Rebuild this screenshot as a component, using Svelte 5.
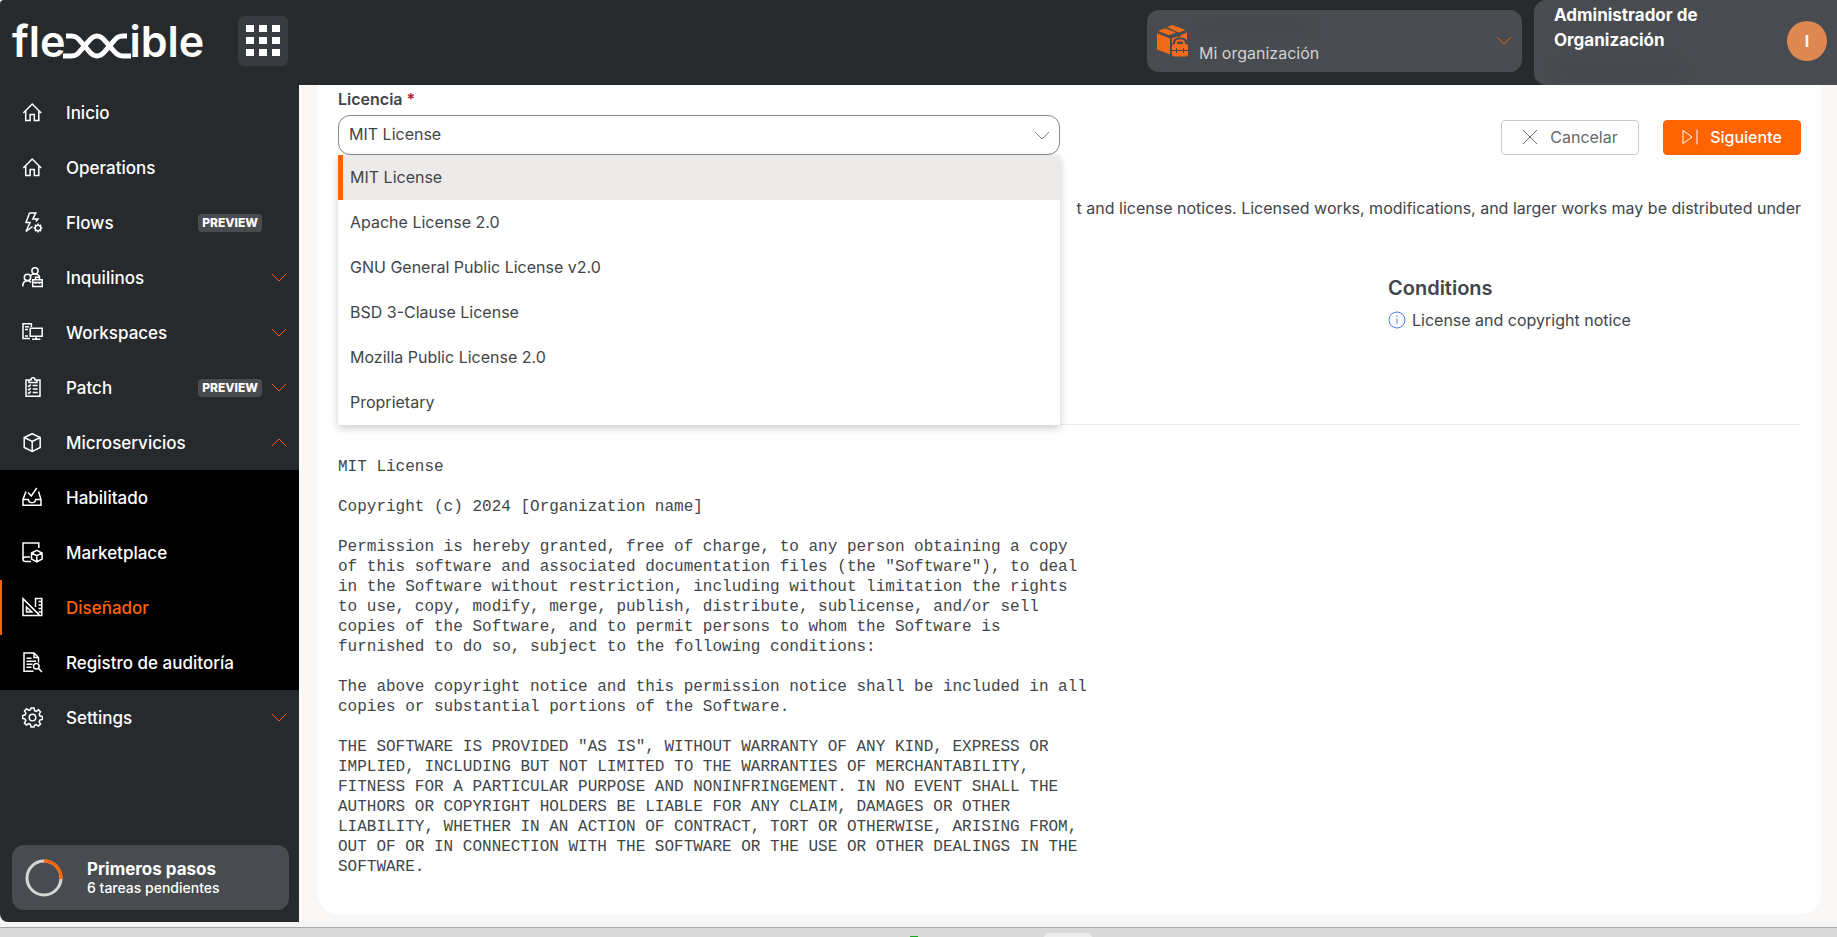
<script>
  const licenses = [
    'MIT License',
    'Apache License 2.0',
    'GNU General Public License v2.0',
    'BSD 3-Clause License',
    'Mozilla Public License 2.0',
    'Proprietary'
  ];

  const topItems = [
    { label: 'Inicio', icon: 'home' },
    { label: 'Operations', icon: 'home' },
    { label: 'Flows', icon: 'flows', preview: true },
    { label: 'Inquilinos', icon: 'tenants', group: true },
    { label: 'Workspaces', icon: 'workspaces', group: true },
    { label: 'Patch', icon: 'patch', preview: true, group: true }
  ];

  const microItems = [
    { label: 'Habilitado', icon: 'enabled' },
    { label: 'Marketplace', icon: 'market' },
    { label: 'Diseñador', icon: 'designer' },
    { label: 'Registro de auditoría', icon: 'audit' }
  ];

  let active = $state('Diseñador');
  let microOpen = $state(true);
  let license = $state('MIT License');
  let listOpen = $state(true);

  const licenseText = `MIT License

Copyright (c) 2024 [Organization name]

Permission is hereby granted, free of charge, to any person obtaining a copy
of this software and associated documentation files (the "Software"), to deal
in the Software without restriction, including without limitation the rights
to use, copy, modify, merge, publish, distribute, sublicense, and/or sell
copies of the Software, and to permit persons to whom the Software is
furnished to do so, subject to the following conditions:

The above copyright notice and this permission notice shall be included in all
copies or substantial portions of the Software.

THE SOFTWARE IS PROVIDED "AS IS", WITHOUT WARRANTY OF ANY KIND, EXPRESS OR
IMPLIED, INCLUDING BUT NOT LIMITED TO THE WARRANTIES OF MERCHANTABILITY,
FITNESS FOR A PARTICULAR PURPOSE AND NONINFRINGEMENT. IN NO EVENT SHALL THE
AUTHORS OR COPYRIGHT HOLDERS BE LIABLE FOR ANY CLAIM, DAMAGES OR OTHER
LIABILITY, WHETHER IN AN ACTION OF CONTRACT, TORT OR OTHERWISE, ARISING FROM,
OUT OF OR IN CONNECTION WITH THE SOFTWARE OR THE USE OR OTHER DEALINGS IN THE
SOFTWARE.`;

  function pick(name) {
    license = name;
    listOpen = false;
  }
</script>

{#snippet icon(name)}
  <svg class="icon" viewBox="0 0 21 21" aria-hidden="true">
    {#if name === 'home'}
      <path d="M1.3 11 10.2 2l9 9M3.7 9v9.4h4.4v-6h4.2v6h4.5V9" />
    {:else if name === 'flows'}
      <path d="M7.5 1h6.3l-3 6H16l-2.2 2.5M7.5 1 4 10.5h4L4 19.5l6.5-5" />
      <circle cx="16" cy="16" r="2.8" />
      <path d="M16 11.6v1.6M16 18.8v1.6M11.6 16h1.6M18.8 16h1.6M12.9 12.9l1.1 1.1M18 18l1.1 1.1M12.9 19.1 14 18M18 14l1.1-1.1" />
    {:else if name === 'tenants'}
      <circle cx="13" cy="3.8" r="3.1" />
      <circle cx="5.5" cy="10.4" r="3.2" />
      <path d="M.8 19.5c0-3.5 1.7-5.7 4.7-5.7 1.8 0 2.8.8 3.6 1.7M8.6 8.6C9.6 7.5 11 6.9 13 6.9c2.4 0 4 1.2 4.5 3" />
      <path d="M10.7 12.7H20.3v6.8h-9.6zM13.5 12.5v-2.2h4v2.2M10.7 15.6h9.6M13.6 14.7v2M17.4 14.7v2" />
    {:else if name === 'workspaces'}
      <path d="M8 16.6H1V1.8h8.4V5M3 4.8h4M3 7.6h3M3 14h3M8.2 6.3h12v8h-12zM14.2 14.4v2.8M10 17.2h8.3" />
    {:else if name === 'patch'}
      <path d="M6.5 3H4v16.3h14V3h-2.6M7 5.5V3h2c0-1.4.8-2.2 2-2.2S13 1.6 13 3h2v2.5z" />
      <path d="M10.7 8.5h5M10.7 12h5M10.7 15.5h5M6 8.5l1 1 1.8-2M6 12l1 1 1.8-2M6 15.5l1 1 1.8-2" />
    {:else if name === 'cube'}
      <path d="m10.2 1.7 8 3.8v10l-8 4-8-4v-10zM2.2 5.5l8 4 8-4M10.2 9.5v10" />
    {:else if name === 'enabled'}
      <path d="M4 4.500 1 12.500v5.800h18v-5.800L16.500 4.500M1 12.500h5.300c.3 2.200 1.700 3.200 3.700 3.200s3.400-1 3.700-3.200H19M6 5.500 9.300 9l5.400-8" />
    {:else if name === 'market'}
      <path d="M1 17.5V1h15.8v5M1 17.5C1 15.5 2.3 15 3.5 15H8M1 17.5c0 1.6 1 2 2.5 2H9" />
      <path d="m14.8 8.4 5.3 2.6v6l-5.3 2.8L9.5 17v-6zM9.5 11l5.3 2.7 5.3-2.7M14.8 13.7v6" />
    {:else if name === 'designer'}
      <path d="M1 1.6v17h17zM4.5 10v5h5.2zM13.5 10V1.4h6.3v17.2H18M19.5 4.5h-3M19.5 8h-3M19.5 11.5h-3M19.5 15h-3" />
    {:else if name === 'audit'}
      <path d="M11.5 19.3H2V1h10l4.500 4.500v5M12 1v4.500h4.500M4.500 6.300h5M4.500 9.300h9.500M4.500 12.300h6M4.500 15.300h5" />
      <circle cx="14.3" cy="14.3" r="2.8" />
      <path d="m16.4 16.4 3.6 3.6" />
    {:else if name === 'gear'}
      <circle cx="10.5" cy="10.5" r="3.3" />
      <path d="M9 1h3l.6 2.600 1.600.7 2.300-1.500 2 2.100-1.300 2.300.6 1.600 2.500.7v2.900l-2.500.7-.7 1.600 1.400 2.300-2.100 2-2.300-1.300-1.600.7L12 20H9l-.6-2.600-1.600-.7-2.300 1.300-2.100-2 1.400-2.300-.7-1.600L.7 11.400v-2.900l2.500-.7.7-1.600-1.400-2.300 2.100-2.100 2.300 1.500 1.600-.7z" />
    {/if}
  </svg>
{/snippet}

{#snippet chevron(up = false)}
  <svg class="chevron" class:up viewBox="0 0 16 9" aria-hidden="true">
    <path d="m1 1 7 7 7-7" />
  </svg>
{/snippet}

<div class="page">
  <header>
    <a class="brand" href="#inicio" aria-label="flexxible">
      <span>fle</span>
      <svg viewBox="0 0 68 26" aria-hidden="true">
        <path d="M3 3h5c5 0 7 2 10 6l7 8c3 4 5 6 9 6s6-2 9-6l7-8c3-4 5-6 10-6h4" />
        <path d="M0 23h8c5 0 7-2 10-6l7-8c3-4 5-6 9-6s6 2 9 6l7 8c3 4 6 6 10 6h8" />
      </svg>
      <span>ible</span>
    </a>
    <button class="apps" aria-label="Aplicaciones">
      {#each Array(9) as _}
        <i></i>
      {/each}
    </button>

    <button class="org">
      <svg class="org-icon" viewBox="0 0 32 32" aria-hidden="true">
        <path d="m1 6 7-2.800 11 4.300-7 2.800zM10 2 15.500 0l13 5-7 2.600zM0 8.300l13 5.200v16L0 24.500z" />
        <path d="M15 13.300 20 11.400l2 1 2-2.400 6-2.400v7.900c-1-2-3-3-6-3-5 0-8 1-8 5l-1 1z" />
        <path d="M15 21c0-1 1-2 2-2h1c0-3 1-4.500 3-4.500h4c2 0 3 1.500 3 4.500h1c1 0 2 1 2 2v8.500c0 1-1 2-2 2H17c-1 0-2-1-2-2zM20 19h6c0-2-.5-2.500-1.500-2.500h-3c-1 0-1.500.5-1.500 2.500z" fill-rule="evenodd" />
        <path class="cut" d="M15 25.500h16M19.500 23v5M26.500 23v5" />
      </svg>
      <span class="org-text">
        <i class="smudge"></i>
        <span>Mi organización</span>
      </span>
      {@render chevron()}
    </button>

    <button class="user">
      <span class="user-text">
        <b>Administrador de Organización</b>
        <i class="smudge"></i>
      </span>
      <span class="avatar">I</span>
    </button>
  </header>

  <div class="body">
    <aside>
      <nav>
        {#each topItems as item}
          <a class="item" href="#{item.icon}">
            {@render icon(item.icon)}
            <span class="label">{item.label}</span>
            {#if item.preview}<span class="badge">PREVIEW</span>{/if}
            <span class="slot">{#if item.group}{@render chevron()}{/if}</span>
          </a>
        {/each}
        <button class="item" aria-expanded={microOpen} onclick={() => (microOpen = !microOpen)}>
          {@render icon('cube')}
          <span class="label">Microservicios</span>
          <span class="slot">{@render chevron(microOpen)}</span>
        </button>
        {#if microOpen}
          <div class="sub">
            {#each microItems as item}
              <a
                class="item"
                class:active={active === item.label}
                href="#{item.icon}"
                onclick={() => (active = item.label)}
              >
                {@render icon(item.icon)}
                <span class="label">{item.label}</span>
              </a>
            {/each}
          </div>
        {/if}
        <a class="item" href="#settings">
          {@render icon('gear')}
          <span class="label">Settings</span>
          <span class="slot">{@render chevron()}</span>
        </a>
      </nav>

      <button class="steps">
        <svg viewBox="0 0 38 38" aria-hidden="true">
          <circle cx="19" cy="19" r="17" />
          <path d="M19 2a17 17 0 0 1 17 18" />
        </svg>
        <span>
          <b>Primeros pasos</b>
          <small>6 tareas pendientes</small>
        </span>
      </button>
    </aside>

    <main>
      <section class="card">
        <div class="top">
          <div class="field">
            <label for="license">Licencia <em>*</em></label>
            <div class="combo">
              <select id="license" bind:value={license}>
                {#each licenses as name}
                  <option value={name}>{name}</option>
                {/each}
              </select>
              {@render chevron()}
              {#if listOpen}
                <div class="list" role="listbox" aria-label="Licencia">
                  {#each licenses as name}
                    <button
                      role="option"
                      aria-selected={license === name}
                      class:selected={license === name}
                      onclick={() => pick(name)}>{name}</button>
                  {/each}
                </div>
              {/if}
            </div>
          </div>
          <div class="actions">
            <button class="btn">
              <svg viewBox="0 0 16 16" aria-hidden="true"><path d="m1 1 14 14M15 1 1 15" /></svg>
              Cancelar
            </button>
            <button class="btn primary">
              <svg viewBox="0 0 16 16" aria-hidden="true"><path d="M1 1.5v13L10 8zM15 .5v15" /></svg>
              Siguiente
            </button>
          </div>
        </div>

        <p class="summary">
          t and license notices. Licensed works, modifications, and larger works may be distributed under
        </p>

        <div class="rules">
          <div class="conditions">
            <h3>Conditions</h3>
            <p>
              <svg viewBox="0 0 18 18" aria-hidden="true">
                <circle cx="9" cy="9" r="8" />
                <path d="M9 7.5V13M9 4.5V6" />
              </svg>
              License and copyright notice
            </p>
          </div>
        </div>

        <pre>{licenseText}</pre>
      </section>
    </main>
  </div>

  <footer>
    <i class="dot"></i>
    <i class="tab"></i>
  </footer>
</div>

<style>
  :global(body) {
    margin: 0;
    background: #f5f5f5;
  }

  .page {
    min-height: 100vh;
    display: flex;
    flex-direction: column;
    overflow: hidden;
    font-family: Inter, 'Liberation Sans', sans-serif;
    font-size: 16px;
    color: #424549;
  }

  .page :global(*) {
    box-sizing: border-box;
  }

  button {
    font: inherit;
    color: inherit;
    background: none;
    border: 0;
    padding: 0;
    text-align: left;
    cursor: pointer;
  }

  a {
    color: inherit;
    text-decoration: none;
  }

  svg {
    fill: none;
    stroke: currentColor;
    flex: none;
  }

  /* header */
  header {
    display: flex;
    align-items: center;
    height: 85px;
    padding-left: 12px;
    background: #272a2d;
    color: #fff;
    border-top-left-radius: 4px;
  }

  .brand {
    display: flex;
    align-items: center;
    width: 196px;
    padding-bottom: 3px;
    font-size: 43px;
    line-height: 48px;
    font-weight: 600;
  }

  .brand svg {
    width: 68px;
    height: 26px;
    margin: 9px -2px 0 -2px;
    stroke-width: 5;
  }

  .apps {
    display: grid;
    grid-template-columns: repeat(3, 8px);
    gap: 5px;
    place-content: center;
    width: 50px;
    height: 50px;
    margin: 0 auto 4px 30px;
    border-radius: 6px;
    background: #383b40;
  }

  .apps i {
    height: 7px;
    background: #fff;
  }

  .org {
    display: flex;
    align-items: center;
    gap: 10px;
    width: 375px;
    height: 62px;
    margin: 0 12px 4px 0;
    padding: 0 10px;
    border-radius: 12px;
    background: #484b4f;
    color: #d2d2d3;
  }

  .org-icon {
    width: 32px;
    height: 32px;
    fill: #f26a1b;
    stroke: none;
  }

  .org-icon .cut {
    stroke: #484b4f;
    stroke-width: 1;
  }

  .org-text {
    flex: 1;
    display: flex;
    flex-direction: column;
    gap: 8px;
  }

  .smudge {
    display: block;
    width: 110px;
    height: 16px;
    border-radius: 8px;
    background: #454850;
    filter: blur(4px);
  }

  .user {
    display: flex;
    align-items: center;
    justify-content: space-between;
    width: 303px;
    height: 85px;
    padding: 0 10px 4px 20px;
    border-radius: 12px 0 0 12px;
    background: #484b4f;
  }

  .user-text {
    width: 180px;
    padding-bottom: 2px;
    font-size: 17px;
    line-height: 25px;
  }

  .user-text .smudge {
    margin-top: 8px;
    width: 130px;
  }

  .avatar {
    width: 40px;
    height: 40px;
    border-radius: 50%;
    background: #dc8850;
    line-height: 40px;
    text-align: center;
    font-weight: 700;
  }

  .chevron {
    width: 16px;
    height: 9px;
    color: #f06010;
  }

  .up {
    transform: rotate(180deg);
  }

  /* sidebar */
  .body {
    flex: 1;
    display: flex;
  }

  aside {
    flex: none;
    display: flex;
    flex-direction: column;
    justify-content: space-between;
    width: 299px;
    background: #272a2d;
    color: #fff;
    border-bottom-left-radius: 8px;
  }

  .item {
    display: flex;
    align-items: center;
    width: 100%;
    height: 55px;
    padding: 0 12px 0 22px;
    font-size: 17px;
    font-weight: 500;
  }

  .icon {
    width: 21px;
    height: 21px;
    stroke-width: 1.5;
  }

  .label {
    flex: 1;
    padding-left: 23px;
  }

  .badge {
    padding: 0 4px;
    border-radius: 4px;
    background: #484b4f;
    font-size: 12px;
    line-height: 18px;
    font-weight: 800;
  }

  .slot {
    display: flex;
    justify-content: flex-end;
    width: 25px;
  }

  .sub {
    background: #000;
  }

  .active {
    box-shadow: inset 2px 0 #ff6400;
  }

  .active .label {
    color: #ff6400;
  }

  .steps {
    display: flex;
    align-items: center;
    gap: 24px;
    height: 65px;
    margin: 12px 10px 12px 12px;
    padding: 0 13px;
    border-radius: 12px;
    background: #484b4f;
  }

  .steps svg {
    width: 38px;
    height: 38px;
    stroke: #d6d6d6;
    stroke-width: 3;
  }

  .steps path {
    stroke: #ff6400;
  }

  .steps b,
  .steps small {
    display: block;
    line-height: 20px;
  }

  .steps b {
    font-size: 17px;
  }

  .steps small {
    font-size: 14px;
    line-height: 18px;
    font-weight: 500;
  }

  /* content */
  main {
    flex: 1;
    min-width: 0;
    padding: 0 16px 8px 19px;
    background: #faf8f7;
  }

  .card {
    height: 100%;
    padding: 3px 20px 0;
    border-radius: 0 0 20px 20px;
    background: #fff;
  }

  .top {
    display: grid;
    grid-template-columns: 1fr 1fr;
    gap: 20px;
  }

  label {
    display: block;
    line-height: 22px;
    margin-bottom: 5px;
    font-weight: 600;
  }

  em {
    font-style: normal;
    color: #b3202a;
  }

  .combo {
    position: relative;
  }

  select {
    display: block;
    width: 100%;
    height: 40px;
    padding: 0 10px 2px;
    border: 1px solid #85878b;
    border-radius: 12px;
    background: #fff;
    font: inherit;
    color: inherit;
    appearance: none;
  }

  .combo .chevron {
    position: absolute;
    top: 16px;
    right: 10px;
    color: #85878b;
    pointer-events: none;
  }

  .list {
    position: absolute;
    z-index: 2;
    top: 100%;
    left: 0;
    right: 0;
    background: #fff;
    box-shadow: 0 3px 8px rgba(0, 0, 0, 0.2);
  }

  .list button {
    display: block;
    width: 100%;
    height: 45px;
    padding: 0 12px 2px;
  }

  .list .selected {
    background: #ecebe9;
    box-shadow: inset 5px 0 #ff6400;
  }

  .actions {
    display: flex;
    justify-content: flex-end;
    align-items: flex-end;
    gap: 24px;
  }

  .btn {
    display: flex;
    align-items: center;
    justify-content: center;
    gap: 12px;
    width: 138px;
    height: 35px;
    padding-bottom: 1px;
    border: 1px solid #c9c9c9;
    border-radius: 4px;
    color: #66696c;
  }

  .btn svg {
    width: 16px;
    height: 16px;
  }

  .primary {
    border-color: #ff6400;
    background: #ff6400;
    color: #fff;
    font-weight: 500;
  }

  .summary {
    margin: 41px 0 0;
    line-height: 24px;
    text-align: right;
  }

  .rules {
    display: grid;
    grid-template-columns: repeat(3, 1fr);
    gap: 112px;
    height: 173px;
    margin-top: 32px;
    padding-top: 24px;
    border-bottom: 1px solid #ececec;
  }

  .conditions {
    grid-column: 3;
  }

  h3 {
    margin: 0;
    font-size: 20px;
    line-height: 24px;
    font-weight: 600;
  }

  .rules p {
    display: flex;
    align-items: center;
    gap: 6px;
    margin: 8px 0 0;
    line-height: 24px;
    white-space: nowrap;
  }

  .rules svg {
    width: 18px;
    height: 18px;
    stroke: #4b7bf5;
  }

  pre {
    margin: 32px 0 24px;
    font-family: 'Liberation Mono', monospace;
    font-size: 16px;
    line-height: 20px;
  }

  /* desktop edge under the window */
  footer {
    display: flex;
    align-items: flex-end;
    height: 10px;
    margin-top: 5px;
    border-top: 1px solid #a9a9a9;
    background: #d9d9d9;
  }

  .dot {
    width: 8px;
    height: 1px;
    margin-left: 910px;
    background: #19a519;
  }

  .tab {
    width: 48px;
    height: 4px;
    margin-left: 126px;
    border-radius: 4px 4px 0 0;
    background: #ededed;
  }
</style>
